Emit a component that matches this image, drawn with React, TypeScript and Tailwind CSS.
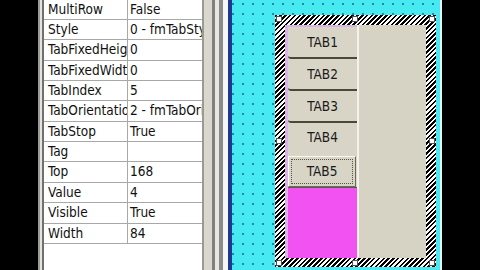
import React from 'react'

const PROPS: [string, string][] = [
  ['MultiRow', 'False'],
  ['Style', '0 - fmTabStyleTabs'],
  ['TabFixedHeight', '0'],
  ['TabFixedWidth', '0'],
  ['TabIndex', '5'],
  ['TabOrientation', '2 - fmTabOrientationLeft'],
  ['TabStop', 'True'],
  ['Tag', ''],
  ['Top', '168'],
  ['Value', '4'],
  ['Visible', 'True'],
  ['Width', '84'],
]

function Handle({ className }: { className: string }) {
  return <div className={`absolute w-[6px] h-[6px] bg-white border border-[#505050] ${className}`} />
}

export default function App() {
  return (
    <div className="w-[480px] h-[270px] flex bg-black overflow-hidden font-['DejaVu_Sans_Condensed','DejaVu_Sans',sans-serif] text-[13.5px] text-[#101010]">
      {/* left black edge */}
      <div className="w-[38px] shrink-0" />

      {/* property grid frame */}
      <div className="w-[2px] bg-[#9a9a9a]" />
      <div className="w-[2px] bg-[#e4e2da]" />
      <div className="w-[2px] bg-[#707070]" />

      {/* property grid */}
      <div className="w-[158px] shrink-0 bg-white flex flex-col">
        <div className="-mt-[0.4px]">
          {PROPS.map(([name, value]) => (
            <div key={name} className="h-[20.36px] flex border-b border-[#a8a8a8] leading-[19px]">
              <div className="w-[84px] shrink-0 pl-[4px] border-r border-[#a8a8a8] overflow-hidden whitespace-nowrap">
                {name}
              </div>
              <div className="flex-1 pl-[2px] overflow-hidden whitespace-nowrap">{value}</div>
            </div>
          ))}
        </div>
      </div>

      {/* window edges */}
      <div className="w-[2px] bg-[#9a9a9a]" />
      <div className="w-[8px] bg-[#dad8cc]" />
      <div className="w-[3px] bg-[#808080]" />
      <div className="w-[4px] bg-[#e8e6de]" />
      <div className="w-[4px] bg-[#8a8a8a]" />
      <div className="w-[5px] bg-[#f6f6f6]" />
      <div className="w-[4px] bg-[#1c3890]" />

      {/* form designer canvas */}
      <div className="w-[208px] shrink-0 bg-[#48eaf2] bg-[radial-gradient(circle,#2286ae_0.8px,transparent_1.2px)] bg-[length:10px_10px] bg-[position:-4px_-1px] pl-[43px] pt-[15px]">
        <div className="relative w-[161px] h-[252px] bg-[repeating-linear-gradient(135deg,#000_0_1.8px,#fff_1.8px_3.4px)] pt-[10px] px-[10px] pb-[9px]">
          <div className="h-full flex">
            {/* tabs column */}
            <div className="w-[72px] shrink-0 flex flex-col border-l-[3px] border-t-2 border-[#dcb2e6] bg-[#d8d4c6] text-[13.5px]">
              {['TAB1', 'TAB2', 'TAB3'].map(t => (
                <div key={t} className="h-[32px] shrink-0 flex items-center justify-center border-b-2 border-[#4a4838] rounded-bl-[3px] text-[#1a1a1a]">
                  {t}
                </div>
              ))}
              <div className="h-[29px] shrink-0 flex items-center justify-center text-[#1a1a1a]">TAB4</div>
              <div className="h-[4px] shrink-0" />
              <div className="h-[31px] shrink-0 mr-[1px] border-t border-l border-[#fbfaf2] border-r border-b border-r-[#6c6a58] border-b-[#6c6a58] p-[2px]">
                <div className="h-full border border-dotted border-[#55533f] flex items-center justify-center text-[#1a1a1a]">
                  TAB5
                </div>
              </div>
              <div className="h-[1px] shrink-0 bg-[#5a5848]" />
              <div className="flex-1 bg-[#f252f2]" />
            </div>
            <div className="w-[2px] shrink-0 bg-[#f4f2ea]" />
            <div className="flex-1 bg-[#d6d2c4]" />
          </div>

          <Handle className="left-[1px] top-[1px]" />
          <Handle className="left-[77px] top-[1px]" />
          <Handle className="right-[1px] top-[1px]" />
          <Handle className="left-[1px] top-[123px]" />
          <Handle className="right-[1px] top-[123px]" />
          <Handle className="left-[1px] bottom-[1px]" />
          <Handle className="left-[77px] bottom-[1px]" />
          <Handle className="right-[1px] bottom-[1px]" />
        </div>
      </div>

      <div className="w-[2px] bg-[#e6f6f6]" />
      <div className="flex-1" />
    </div>
  )
}
